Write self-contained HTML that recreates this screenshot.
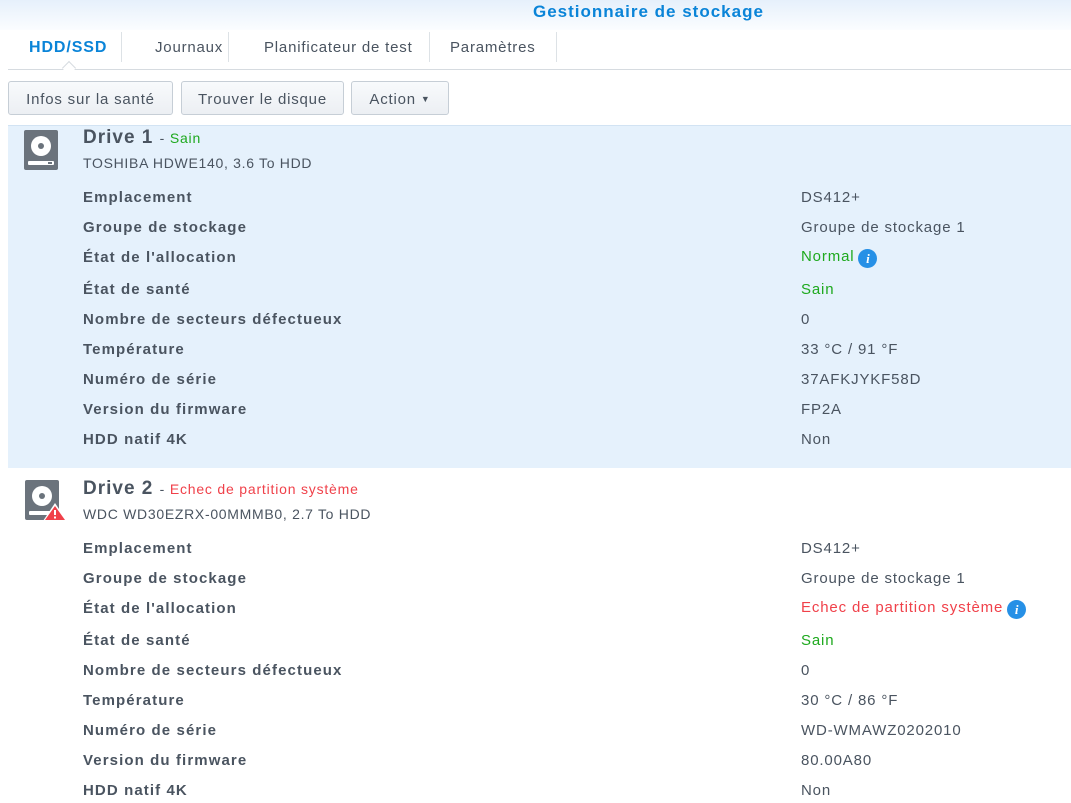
<!DOCTYPE html>
<html><head><style>
*{margin:0;padding:0;box-sizing:border-box}
body{width:1071px;height:803px;overflow:hidden;background:#fff;font-family:"Liberation Sans",sans-serif;color:#4a5460;position:relative;letter-spacing:0.8px}
.title{position:absolute;top:0;left:0;width:1071px;height:30px;background:linear-gradient(#e6f0fb,#fbfdff);}
.title span{position:absolute;left:533px;top:2px;font-size:17px;font-weight:bold;color:#0a84d8;letter-spacing:1px}
.tabs{position:absolute;top:32px;left:8px;width:1063px;height:38px;border-bottom:1px solid #d6dbe0}
.tab{position:absolute;top:0;height:30px;line-height:32px;font-size:15px;color:#4a5460;border-left:1px solid #dde2e6}
.tab.a{color:#0a84d8;font-weight:bold;font-size:16px;letter-spacing:0.9px}
.btn{position:absolute;top:81px;height:34px;line-height:35px;border:1px solid #c6ced6;border-radius:3px;background:linear-gradient(#f8fafc,#eceff3);font-size:15px;text-align:center;color:#4a5460}
.hl{position:absolute;left:8px;top:125px;width:1063px;height:343px;background:#e5f1fc;border-top:1px solid #d2e3f3}
.dname{position:absolute;left:83px;font-size:19px;font-weight:bold;color:#4a5460;letter-spacing:1px}
.dname span{font-size:14px;font-weight:normal;letter-spacing:0.8px}
.sub{position:absolute;left:83px;font-size:14px;color:#4a5460;letter-spacing:0.7px}
.l{position:absolute;left:83px;font-size:15px;font-weight:bold;color:#4a5460;letter-spacing:1.1px}
.v{position:absolute;left:801px;font-size:15px;color:#4a5460;letter-spacing:0.85px}
.g{color:#1ea91e}.r{color:#f0414a}
.i{display:inline-block;width:19px;height:19px;border-radius:50%;background:#2690e6;color:#fff;font:italic bold 13px "Liberation Serif",serif;text-align:center;line-height:19px;vertical-align:-2px;margin-left:4px;letter-spacing:0}
</style></head><body>
<div class="title"><span>Gestionnaire de stockage</span></div>
<div class="tabs">
<div class="tab a" style="left:0;width:113px;border-left:none;padding-left:21px">HDD/SSD</div>
<div class="tab" style="left:113px;width:107px;padding-left:33px">Journaux</div>
<div class="tab" style="left:220px;width:201px;padding-left:35px">Planificateur de test</div>
<div class="tab" style="left:421px;width:127px;padding-left:20px">Paramètres</div>
<div class="tab" style="left:548px;width:1px"></div>
<div style="position:absolute;left:56px;top:31px;width:10px;height:10px;background:#fff;border-left:1px solid #d6dbe0;border-top:1px solid #d6dbe0;transform:rotate(45deg)"></div>
</div>
<div class="btn" style="left:8px;width:165px">Infos sur la santé</div>
<div class="btn" style="left:181px;width:163px">Trouver le disque</div>
<div class="btn" style="left:351px;width:98px">Action <span style="font-size:9px;vertical-align:2px">▼</span></div>
<div class="hl"></div>
<svg style="position:absolute;left:24px;top:130px" width="34" height="40"><rect x="0" y="0" width="34" height="40" rx="2" fill="#6b737c"/><circle cx="17" cy="16" r="10" fill="#fff"/><circle cx="17" cy="16" r="3" fill="#6b737c"/><rect x="4" y="31" width="26" height="4" rx="1" fill="#fff"/><rect x="24" y="32" width="4" height="2" fill="#6b737c"/></svg>
<div class="dname" style="top:127px">Drive 1 <span>- <span class="g">Sain</span></span></div>
<div class="sub" style="top:155px">TOSHIBA HDWE140, 3.6 To HDD</div>
<div class="l" style="top:189px">Emplacement</div><div class="v" style="top:189px">DS412+</div>
<div class="l" style="top:219px">Groupe de stockage</div><div class="v" style="top:219px">Groupe de stockage 1</div>
<div class="l" style="top:249px">État de l'allocation</div><div class="v g" style="top:248px">Normal<span class="i">i</span></div>
<div class="l" style="top:281px">État de santé</div><div class="v g" style="top:281px">Sain</div>
<div class="l" style="top:311px">Nombre de secteurs défectueux</div><div class="v" style="top:311px">0</div>
<div class="l" style="top:341px">Température</div><div class="v" style="top:341px">33 °C / 91 °F</div>
<div class="l" style="top:371px">Numéro de série</div><div class="v" style="top:371px">37AFKJYKF58D</div>
<div class="l" style="top:401px">Version du firmware</div><div class="v" style="top:401px">FP2A</div>
<div class="l" style="top:431px">HDD natif 4K</div><div class="v" style="top:431px">Non</div>
<svg style="position:absolute;left:24px;top:480px" width="44" height="42"><rect x="1" y="0" width="34" height="40" rx="2" fill="#6b737c"/><circle cx="18" cy="16" r="10" fill="#fff"/><circle cx="18" cy="16" r="3" fill="#6b737c"/><rect x="5" y="31" width="26" height="4" rx="1" fill="#fff"/><path d="M31 23 L43 41 L19 41 Z" fill="#fff"/><path d="M31 26 L41 40 L21 40 Z" fill="#f0414a"/><rect x="30" y="30" width="2" height="5" fill="#fff"/><rect x="30" y="36.5" width="2" height="2" fill="#fff"/></svg>
<div class="dname" style="top:478px">Drive 2 <span>- <span class="r">Echec de partition système</span></span></div>
<div class="sub" style="top:506px">WDC WD30EZRX-00MMMB0, 2.7 To HDD</div>
<div class="l" style="top:540px">Emplacement</div><div class="v" style="top:540px">DS412+</div>
<div class="l" style="top:570px">Groupe de stockage</div><div class="v" style="top:570px">Groupe de stockage 1</div>
<div class="l" style="top:600px">État de l'allocation</div><div class="v r" style="top:599px">Echec de partition système<span class="i">i</span></div>
<div class="l" style="top:632px">État de santé</div><div class="v g" style="top:632px">Sain</div>
<div class="l" style="top:662px">Nombre de secteurs défectueux</div><div class="v" style="top:662px">0</div>
<div class="l" style="top:692px">Température</div><div class="v" style="top:692px">30 °C / 86 °F</div>
<div class="l" style="top:722px">Numéro de série</div><div class="v" style="top:722px">WD-WMAWZ0202010</div>
<div class="l" style="top:752px">Version du firmware</div><div class="v" style="top:752px">80.00A80</div>
<div class="l" style="top:782px">HDD natif 4K</div><div class="v" style="top:782px">Non</div>
</body></html>
